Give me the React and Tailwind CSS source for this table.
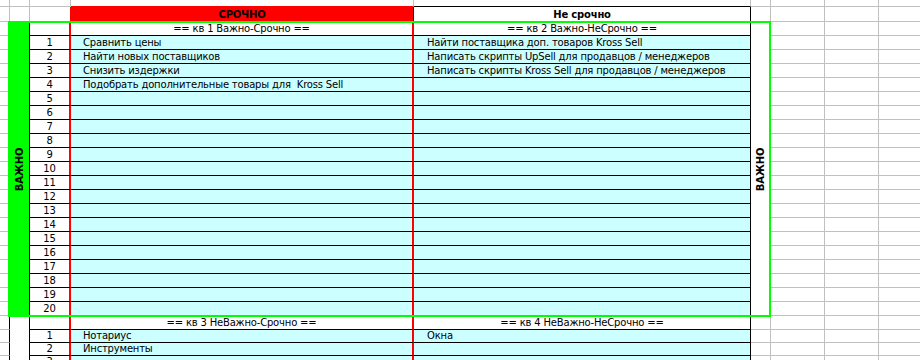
import clsx from 'clsx'

// border presets per side
const R = {
  gray: 'border-r border-r-[#c0c0c0]',
  black: 'border-r border-r-black',
  red: 'border-r border-r-[#ff0000]',
  red2: 'border-r-2 border-r-[#ff0000]',
  none: '',
}
const B = {
  gray: 'border-b border-b-[#c0c0c0]',
  black: 'border-b border-b-black',
  red: 'border-b border-b-[#ff0000]',
  none: '',
}

const Cell = ({ r = 'gray', b = 'gray', className, children }) => (
  <div className={clsx('flex items-end overflow-hidden whitespace-pre leading-[13px]', R[r], B[b], className)}>
    {children}
  </div>
)

const Blank = ({ n }) => Array.from({ length: n }).map((_, i) => <Cell key={i} />)

const kv1 = ['Сравнить цены', 'Найти новых поставщиков', 'Снизить издержки', 'Подобрать дополнительные товары для  Kross Sell']
const kv2 = ['Найти поставщика доп. товаров Kross Sell', 'Написать скрипты UpSell для продавцов / менеджеров', 'Написать скрипты Kross Sell для продавцов / менеджеров']
const kv3 = ['Нотариус', 'Инструменты', '']
const kv4 = ['Окна', '', '']

const Vertical = ({ className }) => (
  <div className={clsx('flex items-center justify-center overflow-hidden', className)}>
    <span className="-rotate-90 whitespace-nowrap font-bold">ВАЖНО</span>
  </div>
)

export default function App() {
  const rows = Array.from({ length: 20 }, (_, i) => i)

  return (
    <div className="relative w-[920px] h-[360px] overflow-hidden bg-white font-['DejaVu_Sans',sans-serif] text-[10px] tracking-[-0.18px] text-black">
      <div className="grid grid-cols-[10px_20px_41px_343px_337px_20px_54px_54px_54px] grid-rows-[7px_15px_repeat(22,14px)_13px_13px_13px] w-[933px]">
        {/* row 0 */}
        <Cell /><Cell /><Cell />
        <Cell b="red" />
        <Cell b="black" />
        <Blank n={4} />

        {/* header row */}
        <Cell /><Cell />
        <Cell r="red" />
        <Cell r="black" className="bg-[#ff0000] justify-center font-bold">СРОЧНО</Cell>
        <Cell r="black" b="black" className="justify-center font-bold">Не срочно</Cell>
        <Blank n={4} />

        {/* кв 1 / кв 2 header */}
        <Cell />
        <Vertical className={clsx('row-span-21 bg-[#00ff00]', R.black)} />
        <Cell r="red2" b="black" />
        <Cell r="red2" b="black" className="justify-center">== кв 1 Важно-Срочно ==</Cell>
        <Cell r="black" b="black" className="justify-center">== кв 2 Важно-НеСрочно ==</Cell>
        <Vertical className="row-span-21 bg-white" />
        <Blank n={3} />

        {rows.map((i) => (
          <Row key={i} n={i + 1} left={kv1[i]} right={kv2[i]} />
        ))}

        {/* кв 3 / кв 4 header */}
        <Cell r="black" />
        <div className={clsx('row-span-4 bg-white', R.black)} />
        <Cell r="red2" b="black" />
        <Cell r="red2" b="black" className="justify-center">== кв 3 НеВажно-Срочно ==</Cell>
        <Cell r="black" b="black" className="justify-center">== кв 4 НеВажно-НеСрочно ==</Cell>
        <Blank n={4} />

        {kv3.map((t, i) => (
          <LowerRow key={i} n={i + 1} left={t} right={kv4[i]} />
        ))}
      </div>

      {/* green frame over the important block */}
      <div className="pointer-events-none absolute left-[8px] top-[21px] w-[763px] h-[296px] border-2 border-[#00ff00]" />
    </div>
  )
}

const Row = ({ n, left, right }) => (
  <>
    <Cell />
    <Cell r="red2" b="black" className="justify-center">{n}</Cell>
    <Cell r="red2" b="black" className="bg-[#ccffff] pl-[12px]">{left}</Cell>
    <Cell r="black" b="black" className="bg-[#ccffff] pl-[13px]">{right}</Cell>
    <Blank n={3} />
  </>
)

const LowerRow = ({ n, left, right }) => (
  <>
    <Cell r="black" />
    <Cell r="red2" b="black" className="justify-center">{n}</Cell>
    <Cell r="red2" b="black" className="bg-[#ccffff] pl-[12px]">{left}</Cell>
    <Cell r="black" b="black" className="bg-[#ccffff] pl-[13px]">{right}</Cell>
    <Blank n={4} />
  </>
)
